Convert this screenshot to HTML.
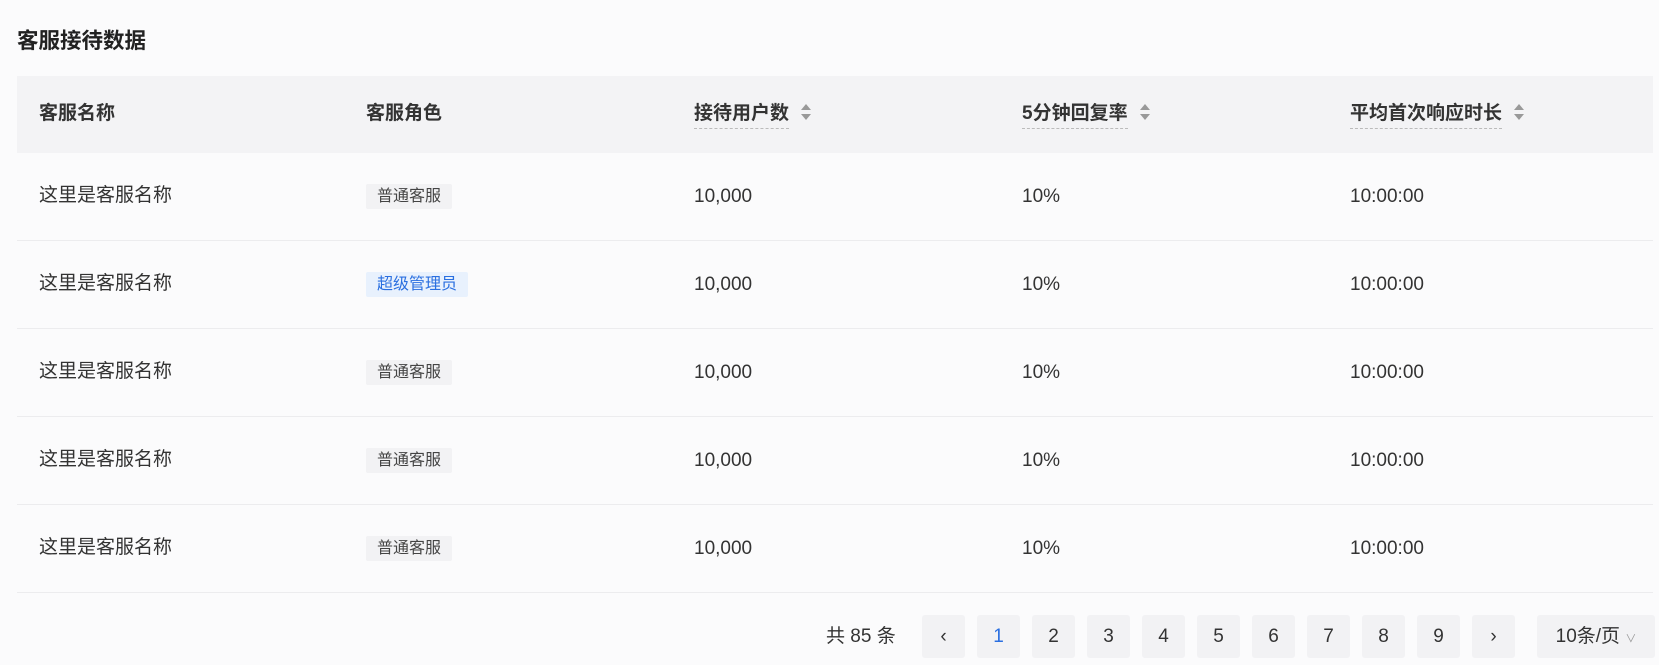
<!DOCTYPE html>
<html><head><meta charset="utf-8"><style>
*{margin:0;padding:0;box-sizing:border-box}
body{width:1659px;height:665px;background:#fbfbfc;font-family:"Liberation Sans","Noto Sans CJK SC",sans-serif;color:#333;position:relative;overflow:hidden}
.title{position:absolute;left:17px;top:24px;font-size:21.5px;font-weight:bold;color:#222}
.hd{position:absolute;left:17px;top:76px;width:1636px;height:77px;background:#f3f3f5}
.c{position:absolute;font-size:19px;white-space:nowrap;line-height:22px}
.h{font-weight:bold;color:#333}
.u{border-bottom:1px dashed #bbb;padding-bottom:4px}
.sort{display:inline-block;vertical-align:middle;margin-left:12px;width:10px;height:16px;position:relative;top:-2px}
.sort:before{content:"";position:absolute;top:0;left:0;border-left:5px solid transparent;border-right:5px solid transparent;border-bottom:6px solid #999}
.sort:after{content:"";position:absolute;bottom:0;left:0;border-left:5px solid transparent;border-right:5px solid transparent;border-top:6px solid #999}
.line{position:absolute;left:17px;width:1636px;height:1px;background:#ececee}
.tag{display:inline-block;background:#f2f2f4;font-size:16px;padding:2px 11px;color:#444;border-radius:2px;line-height:21px}
.tag.b{background:#e8f1fd;color:#2a6fe0}
.pg{position:absolute;top:615px;width:43px;height:43px;background:#f2f2f4;text-align:center;line-height:43px;font-size:19px;color:#333;border-radius:3px}
</style></head><body>
<div class="title">客服接待数据</div>
<div class="hd"></div>
<div class="c h" style="left:39px;top:103px">客服名称</div>
<div class="c h" style="left:366px;top:103px">客服角色</div>
<div class="c h" style="left:694px;top:103px"><span class="u">接待用户数</span><span class="sort"></span></div>
<div class="c h" style="left:1022px;top:103px"><span class="u">5分钟回复率</span><span class="sort"></span></div>
<div class="c h" style="left:1350px;top:103px"><span class="u">平均首次响应时长</span><span class="sort"></span></div>

<div class="c" style="left:39px;top:185px">这里是客服名称</div>
<div class="c" style="left:366px;top:184px"><span class="tag">普通客服</span></div>
<div class="c" style="left:694px;top:186px">10,000</div><div class="c" style="left:1022px;top:186px">10%</div><div class="c" style="left:1350px;top:186px">10:00:00</div>
<div class="line" style="top:240px"></div>

<div class="c" style="left:39px;top:273px">这里是客服名称</div>
<div class="c" style="left:366px;top:272px"><span class="tag b">超级管理员</span></div>
<div class="c" style="left:694px;top:274px">10,000</div><div class="c" style="left:1022px;top:274px">10%</div><div class="c" style="left:1350px;top:274px">10:00:00</div>
<div class="line" style="top:328px"></div>

<div class="c" style="left:39px;top:361px">这里是客服名称</div>
<div class="c" style="left:366px;top:360px"><span class="tag">普通客服</span></div>
<div class="c" style="left:694px;top:362px">10,000</div><div class="c" style="left:1022px;top:362px">10%</div><div class="c" style="left:1350px;top:362px">10:00:00</div>
<div class="line" style="top:416px"></div>

<div class="c" style="left:39px;top:449px">这里是客服名称</div>
<div class="c" style="left:366px;top:448px"><span class="tag">普通客服</span></div>
<div class="c" style="left:694px;top:450px">10,000</div><div class="c" style="left:1022px;top:450px">10%</div><div class="c" style="left:1350px;top:450px">10:00:00</div>
<div class="line" style="top:504px"></div>

<div class="c" style="left:39px;top:537px">这里是客服名称</div>
<div class="c" style="left:366px;top:536px"><span class="tag">普通客服</span></div>
<div class="c" style="left:694px;top:538px">10,000</div><div class="c" style="left:1022px;top:538px">10%</div><div class="c" style="left:1350px;top:538px">10:00:00</div>
<div class="line" style="top:592px"></div>

<div class="c" style="left:826px;top:626px">共 85 条</div>
<div class="pg" style="left:922px">‹</div>
<div class="pg" style="left:977px;color:#2a6fe0">1</div>
<div class="pg" style="left:1032px">2</div>
<div class="pg" style="left:1087px">3</div>
<div class="pg" style="left:1142px">4</div>
<div class="pg" style="left:1197px">5</div>
<div class="pg" style="left:1252px">6</div>
<div class="pg" style="left:1307px">7</div>
<div class="pg" style="left:1362px">8</div>
<div class="pg" style="left:1417px">9</div>
<div class="pg" style="left:1472px">›</div>
<div class="pg" style="left:1537px;width:118px">10条/页 <span style="font-size:11px;color:#999">∨</span></div>
</body></html>
